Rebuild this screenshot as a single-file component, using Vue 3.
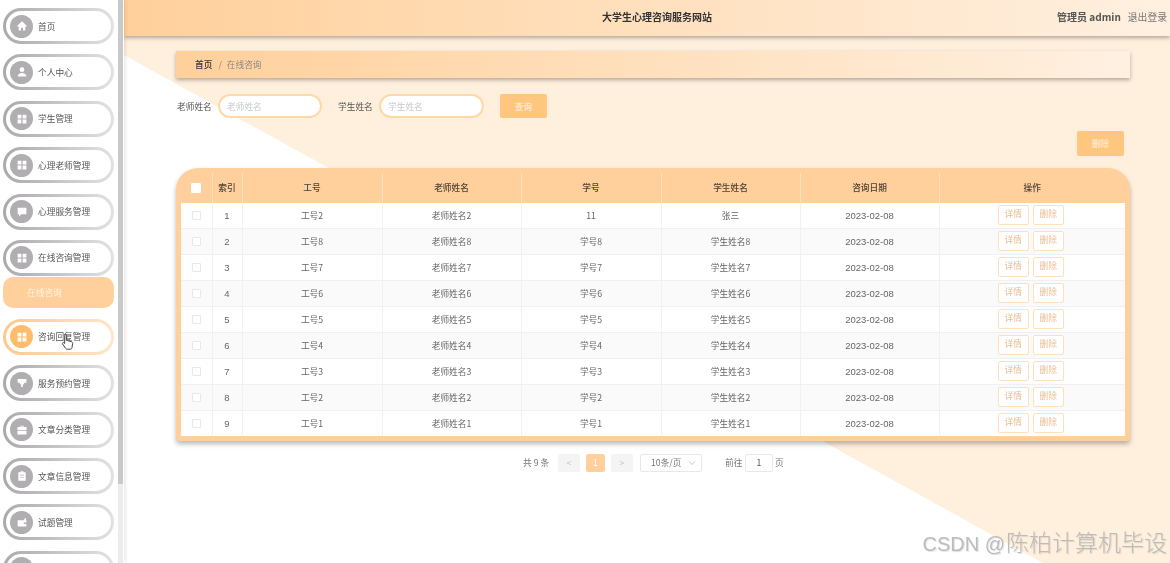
<script setup>
const grid = 'M3 3h4.3v4.3H3zM8.7 3H13v4.3H8.7zM3 8.7h4.3V13H3zM8.7 8.7H13V13H8.7z'
const menu = [
  { name: '首页', icon: 'M8 2.6 2.6 7.6v.9h1.6V13h2.6v-3h2.4v3h2.6V8.5h1.6v-.9z' },
  { name: '个人中心', icon: 'M8 2.6a2.7 2.7 0 1 1 0 5.4 2.7 2.7 0 0 1 0-5.4zM3 13c0-2.4 2.2-3.9 5-3.9s5 1.5 5 3.9z' },
  { name: '学生管理', icon: grid },
  { name: '心理老师管理', icon: grid },
  { name: '心理服务管理', icon: 'M3 3h10v7.6H7.2L4.6 13v-2.4H3z' },
  { name: '在线咨询管理', icon: grid, sub: '在线咨询' },
  { name: '咨询回复管理', icon: grid, active: true },
  { name: '服务预约管理', icon: 'M3 3.4h10v4.4h-2.6v1.6H9v3.2H7V9.4H5.6V7.8H3z' },
  { name: '文章分类管理', icon: 'M6 3h4v1.6h3.2V13H2.8V4.6H6zM7 4v.6h2V4zM2.8 8h10.4v.8H2.8z' },
  { name: '文章信息管理', icon: 'M6.4 2.6h3.2v1.2h2.6V13.4H3.8V3.8h2.6zM5.6 6.6v.8h4.8v-.8zM5.6 9v.8h4.8V9z' },
  { name: '试题管理', icon: 'M3 6h7.4l.8-2.6 1.4.6v2h.4v7H3zM10 8.6v1.8h3V8.6z' },
  { name: '', icon: grid },
]
const rows = [
  ['工号2', '老师姓名2', '11', '张三'],
  ['工号8', '老师姓名8', '学号8', '学生姓名8'],
  ['工号7', '老师姓名7', '学号7', '学生姓名7'],
  ['工号6', '老师姓名6', '学号6', '学生姓名6'],
  ['工号5', '老师姓名5', '学号5', '学生姓名5'],
  ['工号4', '老师姓名4', '学号4', '学生姓名4'],
  ['工号3', '老师姓名3', '学号3', '学生姓名3'],
  ['工号2', '老师姓名2', '学号2', '学生姓名2'],
  ['工号1', '老师姓名1', '学号1', '学生姓名1'],
]
const heads = ['索引', '工号', '老师姓名', '学号', '学生姓名', '咨询日期', '操作']
const widths = [31, 30, 140, 139, 140, 139, 139, 186]
</script>

<template>
  <div class="page">
    <div class="screen">
      <aside class="side">
        <ul class="menu">
          <li v-for="(m, k) in menu" :key="k" class="group">
            <div class="pill" :class="{ active: m.active }">
              <span class="ico">
                <svg width="14" height="14" viewBox="0 0 16 16"><path :d="m.icon" fill="#fff" fill-rule="evenodd" /></svg>
              </span>
              <span v-if="m.name">{{ m.name }}</span>
            </div>
            <div v-if="m.sub" class="sub">{{ m.sub }}</div>
          </li>
        </ul>
        <div class="track"><div class="thumb"></div></div>
        <svg class="cursor" width="14" height="18" viewBox="0 0 14 18">
          <path d="M4 1.5c.9 0 1.3.6 1.3 1.4v4.4l5 1.3c1 .3 1.4 1 1.3 2l-.6 4c-.2 1-.8 1.6-1.8 1.6H6.300c-.8 0-1.300-.3-1.800-1L1.600 11c-.5-.8.4-1.800 1.300-1.200l.8.7V2.900C2.700 2.100 3.200 1.500 4 1.500z" fill="#fff" stroke="#444" stroke-width="1" />
        </svg>
      </aside>

      <main class="main">
        <div class="bg"></div>
        <header class="top">
          <div class="title">大学生心理咨询服务网站</div>
          <div class="admin">管理员 admin</div>
          <div class="logout">退出登录</div>
        </header>

        <div class="content">
          <nav class="crumb">
            <b>首页</b><i>/</i><span>在线咨询</span>
          </nav>

          <form class="search" @submit.prevent>
            <label>老师姓名</label>
            <input class="field first" placeholder="老师姓名" />
            <label class="second">学生姓名</label>
            <input class="field" placeholder="学生姓名" />
            <button class="btn query" type="button">查询</button>
          </form>

          <div class="actions"><button class="btn" type="button">删除</button></div>

          <div class="tablewrap">
            <table>
              <colgroup>
                <col v-for="(w, i) in widths" :key="i" :style="{ width: w + 'px' }" />
              </colgroup>
              <thead>
                <tr>
                  <th><span class="check head"></span></th>
                  <th v-for="h in heads" :key="h">{{ h }}</th>
                </tr>
              </thead>
              <tbody>
                <tr v-for="(r, i) in rows" :key="i">
                  <td><span class="check"></span></td>
                  <td class="digit">{{ i + 1 }}</td>
                  <td v-for="(c, j) in r" :key="j">{{ c }}</td>
                  <td class="digit">2023-02-08</td>
                  <td class="ops"><span class="op">详情</span><span class="op">删除</span></td>
                </tr>
              </tbody>
            </table>
          </div>

          <div class="pager">
            <span class="total">共 9 条</span>
            <span class="pg">&lt;</span>
            <span class="pg on">1</span>
            <span class="pg">&gt;</span>
            <span class="size">10条/页
              <svg width="8" height="6" viewBox="0 0 8 6"><path d="M1 1.500 4 4.500 7 1.500" fill="none" stroke="#c0c4cc" /></svg>
            </span>
            <span class="goto">前往</span>
            <span class="num">1</span>
            <span class="unit">页</span>
          </div>
        </div>
      </main>
    </div>
    <div class="mark"><span class="lat">CSDN @</span><span class="cjk">陈柏计算机毕设</span></div>
  </div>
</template>

<style>
html, body { margin: 0; overflow: hidden; background: #fff; }
</style>

<style scoped>
.page { position: relative; width: 1170px; height: 563px; overflow: hidden; font-family: "Noto Sans CJK SC", "Liberation Sans", sans-serif; font-size: 8.7px; color: #666; }
.screen { display: flex; height: 100%; filter: blur(0.45px); }

.side { position: relative; flex: 0 0 124px; height: 100%; overflow: hidden; background: #fff; box-shadow: 1px 0 4px rgba(0,0,0,.12); z-index: 2; }
.menu { list-style: none; margin: 0; padding: 8px 0 0 2.500px; width: 111.500px; }
.group { margin-bottom: 10.400px; }
.pill { box-sizing: border-box; height: 36px; display: flex; align-items: center; gap: 5px; padding-left: 5px; border: 3.500px solid transparent; border-radius: 18px; color: #555;
  background: linear-gradient(#fff, #fff) padding-box, linear-gradient(90deg, #aaa, #e2e2e2) border-box; }
.pill.active { background: linear-gradient(#fff, #fff) padding-box, linear-gradient(90deg, #ffc98c, #ffe6cb) border-box; }
.ico { flex: 0 0 23px; height: 23px; margin-left: -.5px; border-radius: 50%; background: #b0aeb0; display: flex; align-items: center; justify-content: center; }
.active .ico { background: #ffbd6c; }
.sub { height: 31px; margin-top: 1.500px; border-radius: 10px; background: #ffd09b; color: #fff3e3; line-height: 31px; padding-left: 24.500px; }
.track { position: absolute; top: 0; right: 1px; bottom: 0; width: 5px; background: #ececec; }
.thumb { height: 484px; background: #c9c9c9; }
.cursor { position: absolute; left: 61px; top: 333px; }

.main { position: relative; flex: 1; min-width: 0; background: #fff; }
.bg { position: absolute; inset: 0; background: #ffefdd; clip-path: polygon(0 0, 100% 0, 100% 100%, 919px 100%, 0 55px); }
.top { position: relative; box-sizing: border-box; height: 36px; padding: 0 3px 3px 0; display: flex; align-items: center; background: linear-gradient(90deg, #ffd09b, #fff0e0); box-shadow: 0 2px 4px rgba(0,0,0,.3); color: #444; }
.title { margin-left: 478px; font-size: 10px; font-weight: 700; color: #333; }
.admin { margin-left: auto; font-size: 10px; font-weight: 700; color: #555; }
.logout { margin-left: 7px; font-size: 9.800px; color: #777; }

.content { position: relative; padding: 15px 39px 0 52px; }
.crumb { height: 27px; width: 954px; box-sizing: border-box; padding-left: 19px; display: flex; align-items: center; background: linear-gradient(90deg, #ffd09b, #fff0e0); box-shadow: 0 2px 4px rgba(0,0,0,.3); color: #888; }
.crumb b { color: #333; font-weight: 500; }
.crumb i { font-style: normal; margin: 0 5px 0 6px; color: #888; }

.search { display: flex; align-items: center; margin-top: 16px; height: 24px; padding-left: 1px; }
.search label { color: #555; width: 35px; }
.search .second { margin-left: 16px; }
.field { box-sizing: border-box; width: 105px; height: 24px; margin-left: 6px; padding: 0 7px; border: 2px solid #ffd8a8; border-radius: 12px; background: #fff; font: inherit; outline: none; }
.field.first { width: 104px; }
.field::placeholder { color: #c6c8cd; }
.btn { box-sizing: border-box; width: 47px; height: 24.500px; border: 0; border-radius: 2px; background: #ffc67f; color: #fff3e3; font: inherit; padding: 0; }
.query { margin-left: 16px; }
.actions { display: flex; justify-content: flex-end; margin-top: 13px; padding-right: 7px; }

.tablewrap { margin-top: 12px; width: 954px; box-sizing: border-box; border: 5px solid #ffd09b; border-radius: 22px 22px 4px 4px; background: #ffd09b; box-shadow: 0 3px 5px rgba(0,0,0,.28); overflow: hidden; }
table { width: 944px; table-layout: fixed; border-collapse: collapse; text-align: center; }
th { height: 30px; padding: 0; font-weight: 500; color: #4d4238; border-right: 1px solid #ffdfbc; }
th:last-child, td:last-child { border-right: 0; }
td { height: 25px; padding: 0; background: #fff; border-right: 1px solid #f1f1f1; border-bottom: 1px solid #eef0f3; color: #666; }
.digit { font-family: "Liberation Sans", sans-serif; font-size: 9.500px; }
tr:nth-child(even) td { background: #fafafa; }
tr:last-child td { border-bottom: 0; }
.check { display: block; box-sizing: border-box; width: 9px; height: 9px; margin: 1px auto 0; border: 1px solid #e8e8e8; border-radius: 1px; background: #fff; }
.check.head { width: 10px; height: 10px; margin-top: 0; border-color: #fff; }
.ops { font-size: 0; padding-right: 3px; }
.op { display: inline-block; box-sizing: border-box; width: 31px; height: 20px; line-height: 16px; border: 1.500px solid #ffe0bc; border-radius: 2px; background: #fff; color: #e9bd92; font-size: 8.700px; }
.op + .op { margin-left: 4px; }

.pager { display: flex; align-items: center; height: 18px; margin-top: 13px; padding-left: 347px; color: #777; }
.total { width: 35px; }
.pg { box-sizing: border-box; width: 22px; height: 18px; line-height: 17px; margin-right: 6px; text-align: center; background: #f4f4f5; color: #c0c4cc; border-radius: 2px; }
.pg.on { width: 19px; background: #ffd09b; color: #fff; }
.size { box-sizing: border-box; width: 62px; height: 18px; margin-left: 1px; padding: 0 5px 0 10px; display: flex; align-items: center; justify-content: space-between; border: 1px solid #e6e8ec; border-radius: 2px; background: #fff; }
.goto { margin-left: 23px; width: 20px; }
.num { box-sizing: border-box; width: 28px; height: 18px; line-height: 16px; text-align: center; border: 1px solid #e6e8ec; border-radius: 2px; background: #fff; color: #555; }
.unit { margin-left: 2px; }

.mark { position: absolute; right: 3px; bottom: 5px; display: flex; align-items: baseline; font-size: 23px; line-height: 28px; color: #bcbcbc; text-shadow: 1px 1px 1px rgba(0,0,0,.12); }
.cjk { font-weight: 300; }
.lat { font-family: "Liberation Sans", sans-serif; font-size: 20px; white-space: pre; margin-right: 1px; }
</style>
